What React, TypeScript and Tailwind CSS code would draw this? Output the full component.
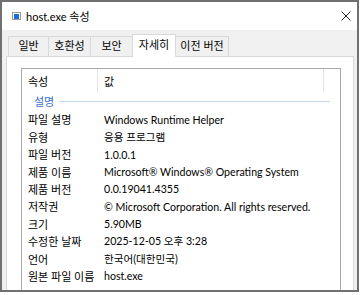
import React from 'react'

const rows: [string, string][] = [
  ['파일 설명', 'Windows Runtime Helper'],
  ['유형', '응용 프로그램'],
  ['파일 버전', '1.0.0.1'],
  ['제품 이름', 'Microsoft® Windows® Operating System'],
  ['제품 버전', '0.0.19041.4355'],
  ['저작권', '© Microsoft Corporation. All rights reserved.'],
  ['크기', '5.90MB'],
  ['수정한 날짜', '2025-12-05 오후 3:28'],
  ['언어', '한국어(대한민국)'],
  ['원본 파일 이름', 'host.exe'],
]

// label + width in px, as drawn by the dialog
const tabs: [string, string][] = [
  ['일반', 'w-[41px]'],
  ['호환성', 'w-[43px]'],
  ['보안', 'w-[43px]'],
  ['자세히', 'w-[44px]'],
  ['이전 버전', 'w-[54px]'],
]

export default function App() {
  return (
    <div
      className="w-[362px] h-[295px] bg-white overflow-hidden text-[11px] text-black"
      style={{ fontFamily: 'Lato, "Noto Sans CJK KR", sans-serif' }}
    >
      <div className="w-[359px] h-[292px] border-2 border-[#707070] flex flex-col overflow-hidden">
        {/* title bar */}
        <div className="h-[28px] shrink-0 bg-white flex items-center pl-[10px] pr-[4px]">
          <div className="w-[9px] h-[8px] border border-[#9a9a9a] bg-white flex items-center justify-center">
            <div className="w-[5px] h-[5px] bg-[#1a6fd8]" />
          </div>
          <span className="ml-[5px] text-[11px] leading-none">host.exe 속성</span>
          <svg className="ml-auto mr-[2px]" width="10" height="10" viewBox="0 0 10 10">
            <path d="M0.5 0.5 L9.5 9.5 M9.5 0.5 L0.5 9.5" stroke="#222" strokeWidth="1" />
          </svg>
        </div>

        {/* body */}
        <div className="flex-1 bg-[#f0f0f0] pt-[3px] pl-[4px] pr-[3px] flex flex-col">
          <div className="flex items-end h-[23px] pl-[2px] shrink-0">
            {tabs.map(([t, w]) => {
              const sel = t === '자세히'
              return sel ? (
                <div
                  key={t}
                  className={`${w} h-[23px] -mb-px -ml-px relative z-10 pb-[2px] border border-b-0 border-[#d9d9d9] bg-white flex items-center justify-center`}
                >
                  {t}
                </div>
              ) : (
                <div
                  key={t}
                  className={`${w} h-[20px] border border-b-0 border-[#d9d9d9] -ml-px first:ml-0 flex items-center justify-center`}
                >
                  {t}
                </div>
              )
            })}
          </div>

          <div className="flex-1 border border-[#d9d9d9] bg-white pt-[11px] pl-[14px] pr-[12px]">
            <div className="h-[240px] border border-[#a9a9a9] border-b-0">
              {/* header */}
              <div className="flex h-[24px] items-center">
                <div className="w-[76px] h-full flex items-center pl-[6px] pt-[2px] border-r border-[#e5e5e5]">속성</div>
                <div className="w-[226px] h-full flex items-center pl-[6px] pt-[2px] border-r border-[#e5e5e5]">값</div>
              </div>
              {/* group */}
              <div className="flex items-center h-[19px] pl-[12px] pr-[10px]">
                <span className="text-[#3b6fd0]">설명</span>
                <div className="flex-1 h-px bg-[#c8d6ee] ml-[5px] -mt-[3px]" />
              </div>
              {rows.map(([k, v]) => (
                <div key={k} className="flex items-center h-[17.4px] whitespace-nowrap">
                  <div className="w-[76px] pl-[6px]">{k}</div>
                  <div className="pl-[6px] text-[10.6px]">{v}</div>
                </div>
              ))}
            </div>
          </div>
        </div>
      </div>
    </div>
  )
}
